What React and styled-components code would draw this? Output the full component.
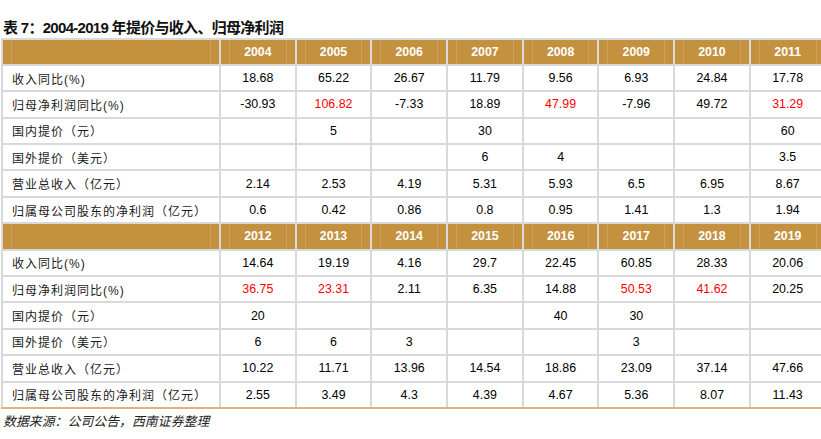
import React from "react";
import styled, { createGlobalStyle } from "styled-components";

const GlobalStyle = createGlobalStyle`
  html, body { margin: 0; padding: 0; background: #fff; overflow: hidden; }
  #root { width: 821px; height: 439px; overflow: hidden; }
`;

const Page = styled.div`
  width: 821px;
  height: 439px;
  overflow: hidden;
  display: flex;
  flex-direction: column;
  font-family: "Liberation Sans", "Noto Sans CJK SC", sans-serif;
  color: #000;
`;

const Title = styled.div`
  height: 37.5px;
  box-sizing: border-box;
  display: flex;
  align-items: flex-end;
  padding: 0 0 1px 3px;
  font-size: 15px;
  line-height: 18px;
  font-weight: 700;
  letter-spacing: -0.7px;
  color: #111;
  white-space: nowrap;
`;

const Grid = styled.div`
  margin-left: 1px;
  width: 824px;
  display: grid;
  grid-template-columns: 216px repeat(8, 73.7px);
  grid-auto-rows: 24.4px;
  gap: 2px;
  padding: 2px 0 0 2px;
  background: #d9d9d9;
  border-bottom: 2px solid #dfb47c;
  flex: none;
`;

const HeadCell = styled.div`
  background:
    linear-gradient(to right,
      transparent 8px, rgba(255,255,255,0.16) 8px, rgba(255,255,255,0.16) 9px, transparent 9px,
      transparent calc(100% - 9px), rgba(255,255,255,0.16) calc(100% - 9px), rgba(255,255,255,0.16) calc(100% - 8px), transparent calc(100% - 8px)),
    #c4913f;
  color: #fff;
  font-weight: 700;
  font-size: 12.3px;
  display: flex;
  align-items: center;
  justify-content: center;
`;

const LabelCell = styled.div`
  background: #fff;
  display: flex;
  align-items: center;
  padding-left: 9px;
  font-size: 12px;
  letter-spacing: 1px;
  color: #1a1a1a;
  white-space: nowrap;
`;

const ValueCell = styled.div`
  background: #fff;
  display: flex;
  align-items: center;
  justify-content: center;
  font-size: 12.4px;
  color: ${(p) => (p.$red ? "#ff0000" : "#000")};
`;

const Footer = styled.div`
  margin-top: 4px;
  padding-left: 3px;
  font-size: 12.8px;
  line-height: 18px;
  font-style: italic;
  letter-spacing: 0.1px;
  color: #222;
  white-space: nowrap;
`;

const labels = [
  "收入同比(%)",
  "归母净利润同比(%)",
  "国内提价（元）",
  "国外提价（美元）",
  "营业总收入（亿元）",
  "归属母公司股东的净利润（亿元）",
];

const blocks = [
  {
    years: ["2004", "2005", "2006", "2007", "2008", "2009", "2010", "2011"],
    rows: [
      ["18.68", "65.22", "26.67", "11.79", "9.56", "6.93", "24.84", "17.78"],
      ["-30.93", "r106.82", "-7.33", "18.89", "r47.99", "-7.96", "49.72", "r31.29"],
      ["", "5", "", "30", "", "", "", "60"],
      ["", "", "", "6", "4", "", "", "3.5"],
      ["2.14", "2.53", "4.19", "5.31", "5.93", "6.5", "6.95", "8.67"],
      ["0.6", "0.42", "0.86", "0.8", "0.95", "1.41", "1.3", "1.94"],
    ],
  },
  {
    years: ["2012", "2013", "2014", "2015", "2016", "2017", "2018", "2019"],
    rows: [
      ["14.64", "19.19", "4.16", "29.7", "22.45", "60.85", "28.33", "20.06"],
      ["r36.75", "r23.31", "2.11", "6.35", "14.88", "r50.53", "r41.62", "20.25"],
      ["20", "", "", "", "40", "30", "", ""],
      ["6", "6", "3", "", "", "3", "", ""],
      ["10.22", "11.71", "13.96", "14.54", "18.86", "23.09", "37.14", "47.66"],
      ["2.55", "3.49", "4.3", "4.39", "4.67", "5.36", "8.07", "11.43"],
    ],
  },
];

export default function App() {
  return (
    <>
      <GlobalStyle />
      <Page>
        <Title>表 7：2004-2019 年提价与收入、归母净利润</Title>
        <Grid>
          {blocks.map((b, bi) => (
            <React.Fragment key={bi}>
              <HeadCell />
              {b.years.map((y) => (
                <HeadCell key={y}>{y}</HeadCell>
              ))}
              {b.rows.map((r, ri) => (
                <React.Fragment key={ri}>
                  <LabelCell>{labels[ri]}</LabelCell>
                  {r.map((v, vi) => {
                    const red = v.startsWith("r");
                    return (
                      <ValueCell key={vi} $red={red}>
                        {red ? v.slice(1) : v}
                      </ValueCell>
                    );
                  })}
                </React.Fragment>
              ))}
            </React.Fragment>
          ))}
        </Grid>
        <Footer>数据来源：公司公告，西南证券整理</Footer>
      </Page>
    </>
  );
}
